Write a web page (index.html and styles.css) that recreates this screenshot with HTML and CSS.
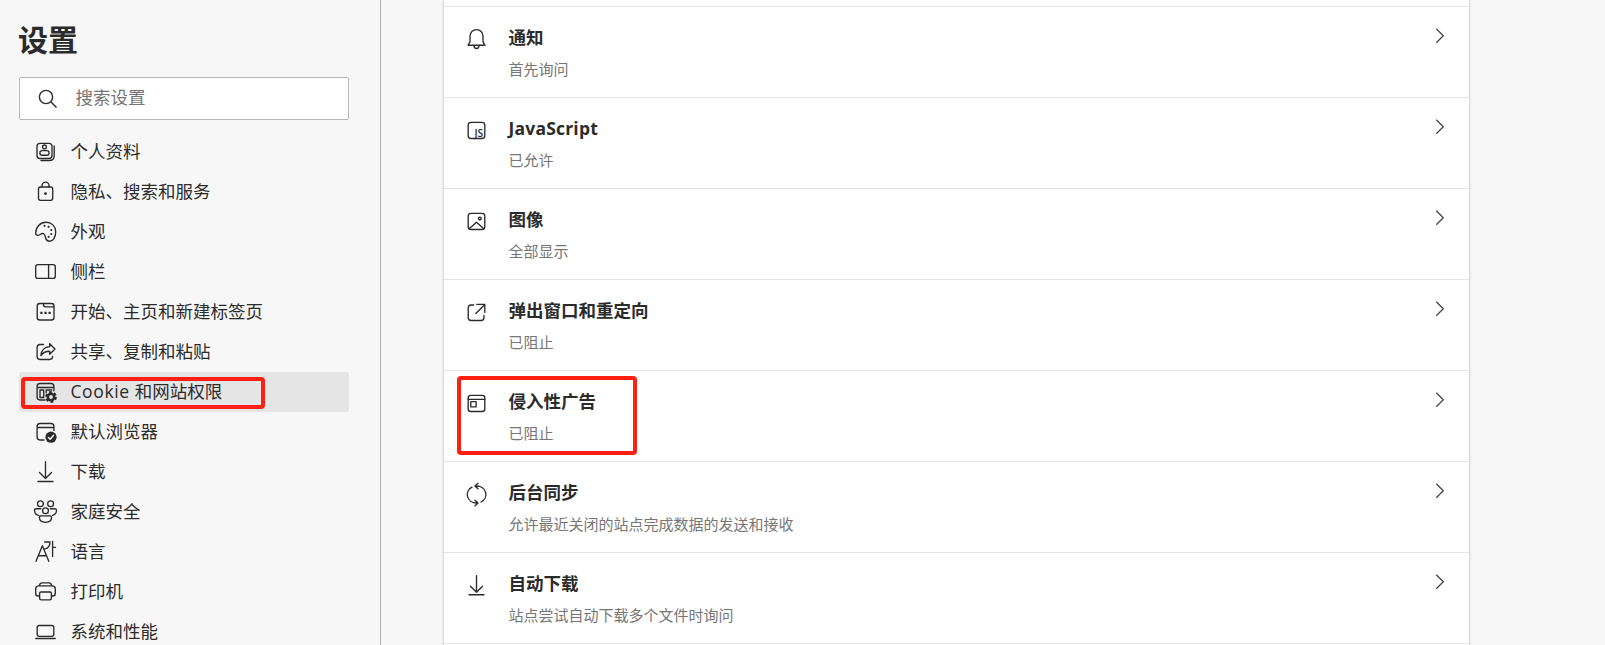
FILE: index.html
```html
<!DOCTYPE html>
<html lang="zh-CN">
<head>
    <meta charset="UTF-8">
    <meta name="viewport" content="width=device-width, initial-scale=1.0">
    <title>设置</title>
    <link rel="stylesheet" href="styles.css">
</head>
<body>
    <div class="page">
        <aside class="sidebar">
            <h1>设置</h1>
            <div class="search">
                <svg class="search-icon" viewBox="0 0 20 20"><circle cx="8" cy="8" r="6.6"/><path d="M12.8 12.8L18.5 18.5"/></svg>
                <span>搜索设置</span>
            </div>
            <ul class="nav">
                <li>
                    <svg class="icon" viewBox="0 0 25 25"><rect x="4" y="3.3" width="15" height="15.2" rx="3"/><path d="M21.2 6v9.7q0 4.8-4.8 4.8H8"/><circle cx="11.5" cy="6.9" r="1.9"/><rect x="6.9" y="10.6" width="9.2" height="4.6" rx="2.2"/></svg>
                    <span>个人资料</span>
                </li>
                <li>
                    <svg class="icon" viewBox="0 0 25 25"><rect x="5.5" y="7" width="14.2" height="13.3" rx="2"/><path d="M9 7V5.6a3.5 3.5 0 0 1 7 0V7"/><circle class="fill" cx="12.5" cy="13.6" r="1.4"/></svg>
                    <span>隐私、搜索和服务</span>
                </li>
                <li>
                    <svg class="icon" viewBox="0 0 25 25"><path d="M2.7 13.2C2.9 6.5 7.5 2.2 13 2.2c5.5 0 9.7 4 9.7 9.5 0 5.5-2.7 9.5-6 9.5-5.8 0-3-5.500-6-7.400-2.300-1.400-3.300 1.500-5.700 1.500-1.500 0-2.300-.8-2.300-2.100z"/><g class="fill"><circle cx="11.5" cy="5.8" r="1.1"/><circle cx="15.6" cy="6.8" r="1.1"/><circle cx="18.3" cy="10" r="1.1"/><circle cx="18.3" cy="14" r="1.1"/><circle cx="15.6" cy="16.8" r="1.1"/></g></svg>
                    <span>外观</span>
                </li>
                <li>
                    <svg class="icon" viewBox="0 0 25 25"><rect x="2.7" y="4.6" width="19.6" height="13.8" rx="2.2"/><path d="M15.6 4.6v13.8"/></svg>
                    <span>侧栏</span>
                </li>
                <li>
                    <svg class="icon" viewBox="0 0 25 25"><rect x="4.2" y="3.5" width="16.8" height="16.5" rx="2.5"/><path d="M10.5 3.5v1.3q0 2 2 2H21"/><path class="fill" d="M7.3 11.8h2.2v2.2H7.3zM11.4 11.8h2.2v2.2h-2.2zM15.5 11.8h2.2v2.2h-2.2z"/></svg>
                    <span>开始、主页和新建标签页</span>
                </li>
                <li>
                    <svg class="icon" viewBox="0 0 25 25"><path d="M10.5 4.5H7q-2.9 0-2.9 2.9v9.2q0 2.9 2.9 2.9h9.7q2.9 0 2.9-2.9V16.3"/><path d="M16.7 3.7L22 9l-5.3 5.3v-3c-4-.2-6.5 1.300-8.8 4.200.5-5 3.400-8.500 8.800-8.900z"/></svg>
                    <span>共享、复制和粘贴</span>
                </li>
                <li class="active">
                    <svg class="icon" viewBox="0 0 25 25"><path d="M12 20H7q-2.9 0-2.9-2.9V6.4q0-2.9 2.9-2.9h11q2.9 0 2.9 2.9v4.3M4.1 7.5h16.8"/><rect x="7" y="10" width="3.7" height="7.5"/><path d="M13.2 12.8V10h5.6"/><circle class="gear" cx="18" cy="17" r="3.2"/><circle class="teeth" cx="18" cy="17" r="4.9"/></svg>
                    <span><span class="latin">Cookie </span>和网站权限</span>
                    <div class="mark mark-nav"></div>
                </li>
                <li>
                    <svg class="icon" viewBox="0 0 25 25"><path d="M11 20H7q-2.9 0-2.9-2.9V6.4q0-2.9 2.9-2.9h11q2.9 0 2.9 2.9v4M4.1 7.5h16.8"/><circle class="fill" cx="18" cy="17.2" r="5.6"/><path class="white" d="M15.4 17.6l1.7 1.7 3.5-4"/></svg>
                    <span>默认浏览器</span>
                </li>
                <li>
                    <svg class="icon" viewBox="0 0 25 25"><path d="M12.5 1.7v16.8M6.500 12.500l6 6 6-6M5 21.500h15"/></svg>
                    <span>下载</span>
                </li>
                <li>
                    <svg class="icon" viewBox="0 0 25 25"><circle cx="7.4" cy="3.7" r="2.9"/><circle cx="17.6" cy="3.7" r="2.9"/><circle cx="12.5" cy="10.7" r="2.9"/><path d="M7.8 8.7H3.100q-1.600 0-1.600 1.600 0 4.300 4 5M17.200 8.700h4.700q1.600 0 1.600 1.600 0 4.300-4 5M8.200 15.800h8.600q1.800 0 1.800 1.500c0 3.300-2.500 5-6.100 5s-6.100-1.700-6.100-5q0-1.500 1.800-1.500z"/></svg>
                    <span>家庭安全</span>
                </li>
                <li>
                    <svg class="icon" viewBox="0 0 25 25"><path d="M3 21.3L9.4 5.7l6.4 15.6M5.3 15.7h8.3M11.7 2H17c0 4-1.700 6.200-5 6.900M19.600 1.300v15.200M19.600 7.300h2.900"/></svg>
                    <span>语言</span>
                </li>
                <li>
                    <svg class="icon" viewBox="0 0 25 25"><path d="M6.5 16H5.2q-2.5 0-2.5-2.5V8.9q0-3 3-3h13.600q3 0 3 3v4.600q0 2.500-2.500 2.500h-1.300M6.500 5.900q0-3 2.700-3h6.600q2.700 0 2.700 3"/><rect x="6.6" y="12" width="11.8" height="7.8" rx="1.5"/></svg>
                    <span>打印机</span>
                </li>
                <li>
                    <svg class="icon" viewBox="0 0 25 25"><rect x="4.2" y="5.5" width="16.6" height="10.8" rx="2"/><path d="M2.8 18.5h19.4"/></svg>
                    <span>系统和性能</span>
                </li>
            </ul>
        </aside>

        <main class="card">
            <div class="row">
                <svg class="icon" viewBox="0 0 25 25"><path d="M4.1 18.2h16.8L19 14.8V9.3C19 5.3 16.2 2.6 12.5 2.6S6 5.3 6 9.3v5.5z"/><path d="M10 18.5c0 4 5 4 5 0"/></svg>
                <div class="text"><h2>通知</h2><p>首先询问</p></div>
                <svg class="chevron" viewBox="0 0 10 16"><path d="M1.3 .8l7 7-7 7"/></svg>
            </div>
            <div class="row">
                <svg class="icon" viewBox="0 0 25 25"><rect x="4.2" y="4.3" width="16.6" height="16.2" rx="2.8"/><text x="10.5" y="19" textLength="8.800" lengthAdjust="spacingAndGlyphs">JS</text></svg>
                <div class="text"><h2 class="js">JavaScript</h2><p>已允许</p></div>
                <svg class="chevron" viewBox="0 0 10 16"><path d="M1.3 .8l7 7-7 7"/></svg>
            </div>
            <div class="row">
                <svg class="icon" viewBox="0 0 25 25"><rect x="4.2" y="4.3" width="16.6" height="16.2" rx="2.8"/><circle cx="15.8" cy="9.6" r="1.4"/><path d="M5.2 19.8l7.3-6.600 7.300 6.600"/></svg>
                <div class="text"><h2>图像</h2><p>全部显示</p></div>
                <svg class="chevron" viewBox="0 0 10 16"><path d="M1.3 .8l7 7-7 7"/></svg>
            </div>
            <div class="row">
                <svg class="icon" viewBox="0 0 25 25"><path d="M9.7 5H7.2Q4.2 5 4.2 8v9.5q0 3 3 3H17q3 0 3-3v-2.2M12.8 4.4h8v8M20.8 4.4l-9 9"/></svg>
                <div class="text"><h2>弹出窗口和重定向</h2><p>已阻止</p></div>
                <svg class="chevron" viewBox="0 0 10 16"><path d="M1.3 .8l7 7-7 7"/></svg>
            </div>
            <div class="row">
                <svg class="icon" viewBox="0 0 25 25"><rect x="4.2" y="4.3" width="16.6" height="16.2" rx="2.5"/><path d="M4.2 8.4h16.6"/><rect x="6.8" y="10.6" width="5.3" height="5.3"/></svg>
                <div class="text"><h2>侵入性广告</h2><p>已阻止</p></div>
                <svg class="chevron" viewBox="0 0 10 16"><path d="M1.3 .8l7 7-7 7"/></svg>
                <div class="mark mark-row"></div>
            </div>
            <div class="row">
                <svg class="icon" viewBox="0 0 25 25"><path d="M8 5.1A9.3 8.5 0 0 0 12.5 21h1.2M17 20A9.3 8.5 0 0 0 12.5 4h-1.200M14 1.200l-3 2.800 3 2.800M11 18.200l3 2.800-3 2.800"/></svg>
                <div class="text"><h2>后台同步</h2><p>允许最近关闭的站点完成数据的发送和接收</p></div>
                <svg class="chevron" viewBox="0 0 10 16"><path d="M1.3 .8l7 7-7 7"/></svg>
            </div>
            <div class="row">
                <svg class="icon" viewBox="0 0 25 25"><path d="M12.5 2.7v16.5M6.500 13.200l6 6 6-6M5 21.700h15"/></svg>
                <div class="text"><h2>自动下载</h2><p>站点尝试自动下载多个文件时询问</p></div>
                <svg class="chevron" viewBox="0 0 10 16"><path d="M1.3 .8l7 7-7 7"/></svg>
            </div>
        </main>
    </div>
</body>
</html>
```
FILE: styles.css
```css
* {
    box-sizing: border-box;
}
body {
    margin: 0;
    height: 645px;
    overflow: hidden;
    background-color: #f7f7f7;
    color: #2b2b2b;
    font-family: "Open Sans", "Noto Sans CJK SC", sans-serif;
    font-size: 17.5px;
}
h1, h2, p, ul {
    margin: 0;
    padding: 0;
}
.page {
    display: flex;
    height: 645px;
}
.sidebar {
    flex: none;
    width: 381px;
    height: 645px;
    padding: 20px 31px 0 19px;
    border-right: 1px solid #b0b0b0;
    overflow: hidden;
}
h1 {
    height: 57px;
    margin-left: -1px;
    font-size: 30px;
    line-height: 40px;
}
.search {
    display: flex;
    align-items: center;
    height: 43px;
    padding-left: 18px;
    border: 1px solid #b8b8b8;
    border-radius: 2px;
    background-color: white;
    color: #757575;
}
.search span {
    margin-left: 17.5px;
    line-height: 38px;
    height: 41px;
}
.search-icon {
    width: 20px;
    height: 20px;
    fill: none;
    stroke: #2b2b2b;
    stroke-width: 1.4;
}
.nav {
    margin-top: 12px;
    list-style: none;
}
.nav li {
    position: relative;
    display: flex;
    height: 40px;
    padding: 8px 0 0 14px;
    border-radius: 2px;
}
.nav li.active {
    background-color: #e5e5e5;
}
.nav li > span {
    margin-left: 12.5px;
    line-height: 22px;
    white-space: nowrap;
}
.latin {
    letter-spacing: 0.6px;
}
.icon {
    flex: none;
    width: 25px;
    height: 25px;
    overflow: visible;
    fill: none;
    stroke: #2b2b2b;
    stroke-width: 1.35;
    stroke-linecap: round;
    stroke-linejoin: round;
}
.icon .fill {
    fill: #2b2b2b;
    stroke: none;
}
.icon .white {
    stroke: white;
    stroke-width: 1.4;
}
.icon .gear {
    stroke-width: 2.6;
}
.icon .teeth {
    stroke-width: 2;
    stroke-linecap: butt;
    stroke-dasharray: 2.8 2.33;
}
.icon text {
    fill: #2b2b2b;
    stroke: none;
    font-size: 11.5px;
    font-weight: 600;
}
.card {
    flex: none;
    width: 1025px;
    height: 660px;
    margin-left: 63px;
    padding-top: 6px;
    background-color: white;
    box-shadow: 0 0 2px rgba(0, 0, 0, 0.3), 0 2px 4px rgba(0, 0, 0, 0.08);
}
.row {
    position: relative;
    display: flex;
    height: 91px;
    padding: 20px 24px 0 20px;
    border-top: 1px solid #e5e5e5;
}
.row:last-child {
    height: 92px;
    border-bottom: 1px solid #e5e5e5;
}
.text {
    flex: 1;
    margin-left: 19.5px;
}
.text h2 {
    height: 32px;
    font-size: 17.5px;
    line-height: 20px;
}
.text h2.js {
    letter-spacing: 0.2px;
}
.text p {
    color: #767676;
    font-size: 15px;
    line-height: 20px;
}
.chevron {
    width: 10px;
    height: 16px;
    margin-top: 1px;
    fill: none;
    stroke: #444;
    stroke-width: 1.3;
}
/* red highlight frames */
.mark {
    position: absolute;
    border: 4px solid #ff1f13;
    border-radius: 4px;
}
.mark-nav {
    left: 2px;
    top: 5px;
    width: 244px;
    height: 32px;
}
.mark-row {
    left: 13px;
    top: 5px;
    width: 180px;
    height: 79px;
}
```
